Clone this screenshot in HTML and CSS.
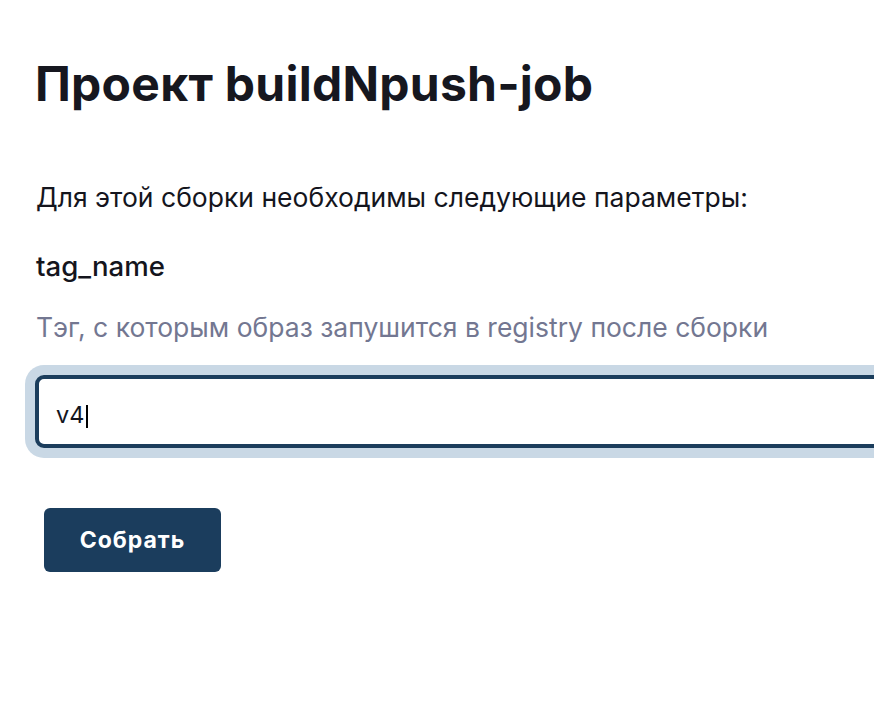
FILE: index.html
```html
<!DOCTYPE html>
<html lang="ru">
<head>
<meta charset="utf-8">
<title>Проект buildNpush-job</title>
<link rel="stylesheet" href="styles.css">
</head>
<body>
<main class="page">
  <h1 class="title">Проект buildNpush-job</h1>
  <p class="intro">Для этой сборки необходимы следующие параметры:</p>
  <form class="form">
    <div class="param">
      <div class="param-name">tag_name</div>
      <div class="param-desc">Тэг, с которым образ запушится в registry после сборки</div>
      <div class="field"><span class="field-value">v4</span><span class="caret"></span></div>
    </div>
    <div class="actions">
      <button type="button" class="btn">Собрать</button>
    </div>
  </form>
</main>
</body>
</html>
```
FILE: styles.css
```css
html, body {
  margin: 0;
  padding: 0;
  background: #ffffff;
  overflow: hidden;
}
body {
  font-family: Inter, "Noto Sans", sans-serif;
  color: #14151d;
}
.page {
  padding: 55px 0 0 35px;
}
.title {
  margin: 0;
  font-size: 48px;
  line-height: 58px;
  font-weight: 700;
  letter-spacing: 0.25px;
  color: #16171f;
}
.intro {
  margin: 68px 0 0 1px;
  font-size: 26.5px;
  line-height: 32px;
  font-weight: 400;
}
.param {
  margin-top: 37px;
}
.param-name {
  margin-left: 1px;
  font-size: 27.6px;
  line-height: 32px;
  font-weight: 500;
}
.param-desc {
  margin: 29px 0 0 1px;
  font-size: 26.5px;
  line-height: 32px;
  color: #737791;
}
.field {
  margin-top: 32px;
  width: 860px;
  height: 73px;
  box-sizing: border-box;
  border: 4px solid #1b3d5c;
  border-radius: 9px;
  box-shadow: 0 0 0 10px #c9d8e5;
  display: flex;
  align-items: center;
  padding: 6px 0 0 17px;
  font-size: 23.5px;
  color: #14151d;
  background: #fff;
}
.caret {
  display: inline-block;
  width: 2px;
  height: 23px;
  background: #000;
  margin: 4px 0 0 2px;
}
.actions {
  margin-top: 60px;
  padding-left: 9px;
}
.btn {
  font-family: Inter, "Noto Sans", sans-serif;
  width: 177px;
  height: 64px;
  border: 0;
  border-radius: 6px;
  background: #1b3d5d;
  color: #ffffff;
  font-size: 23px;
  font-weight: 700;
  letter-spacing: 1px;
  padding: 0;
  cursor: pointer;
}
```
